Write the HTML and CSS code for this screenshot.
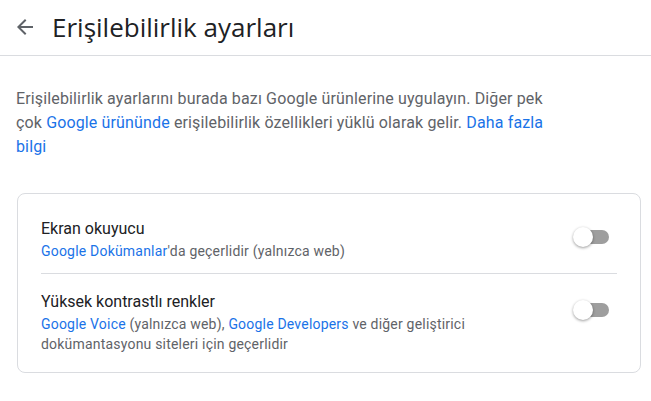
FILE: index.html
```html
<!DOCTYPE html>
<html lang="tr">
<head>
<meta charset="utf-8">
<title>Erişilebilirlik ayarları</title>
<link rel="stylesheet" href="styles.css">
</head>
<body>
<header class="topbar">
  <button class="back" aria-label="Geri">
    <svg viewBox="0 0 24 24" width="24" height="24"><path d="M20 11H7.83l5.59-5.59L12 4l-8 8 8 8 1.41-1.41L7.83 13H20v-2z" fill="#5f6368"/></svg>
  </button>
  <h1 class="title">Erişilebilirlik ayarları</h1>
</header>
<main class="content">
  <p class="intro">Erişilebilirlik ayarlarını burada bazı Google ürünlerine uygulayın. Diğer pek çok <a href="#">Google ürününde</a> erişilebilirlik özellikleri yüklü olarak gelir. <a href="#">Daha fazla bilgi</a></p>
  <section class="card">
    <div class="row row-first">
      <div class="text">
        <div class="row-title">Ekran okuyucu</div>
        <div class="row-sub"><a href="#">Google Dokümanlar</a>'da geçerlidir (yalnızca web)</div>
      </div>
      <span class="switch"><span class="track"></span><span class="knob"></span></span>
    </div>
    <div class="row row-last">
      <div class="text">
        <div class="row-title">Yüksek kontrastlı renkler</div>
        <div class="row-sub"><a href="#">Google Voice</a> (yalnızca web), <a href="#">Google Developers</a> ve diğer geliştirici dokümantasyonu siteleri için geçerlidir</div>
      </div>
      <span class="switch"><span class="track"></span><span class="knob"></span></span>
    </div>
  </section>
</main>
</body>
</html>
```

FILE: styles.css
```css
* { box-sizing: border-box; }
html, body { margin: 0; padding: 0; background: #fff; }
body { font-family: Roboto, "Liberation Sans", Arial, sans-serif; color: #5f6368; }
a { color: #1a73e8; text-decoration: none; }

.topbar {
  display: flex;
  align-items: center;
  height: 56px;
  border-bottom: 1px solid #dadce0;
  padding-left: 13px;
  padding-bottom: 2px;
}
.back {
  display: flex;
  border: 0;
  background: none;
  padding: 0;
  width: 24px;
  height: 24px;
  margin-right: 15px;
}
.title {
  margin: 0;
  font-family: "Open Sans", Roboto, sans-serif;
  font-weight: 400;
  font-size: 26px;
  line-height: 32px;
  color: #202124;
  letter-spacing: 0;
}

.content { padding: 31px 10px 0 16px; }
.intro {
  margin: 0;
  max-width: 545px;
  font-size: 16px;
  line-height: 24px;
  letter-spacing: 0.14px;
  color: #5f6368;
}

.card {
  margin-top: 34px;
  margin-left: 1px;
  border: 1px solid #dadce0;
  border-radius: 8px;
  padding: 0 23px;
}
.row {
  display: flex;
  align-items: flex-start;
  justify-content: space-between;
}
.row-first { padding: 23px 0 12px; border-bottom: 1px solid #dadce0; }
.row-last { padding: 16px 0 18px; }
.text { max-width: 470px; }
.row-title { font-size: 16px; line-height: 24px; color: #202124; }
.row-sub { font-size: 14px; line-height: 20px; letter-spacing: 0.2px; color: #5f6368; }

.switch {
  position: relative;
  width: 36px;
  height: 20px;
  margin-top: 10px;
  margin-right: 8px;
  flex: none;
}
.track {
  position: absolute;
  left: 2px;
  top: 3px;
  width: 34px;
  height: 14px;
  border-radius: 7px;
  background: #9e9e9e;
}
.knob {
  position: absolute;
  left: 0;
  top: 0;
  width: 20px;
  height: 20px;
  border-radius: 50%;
  background: #fff;
  box-shadow: 0 1px 3px rgba(0,0,0,0.4);
}
```
